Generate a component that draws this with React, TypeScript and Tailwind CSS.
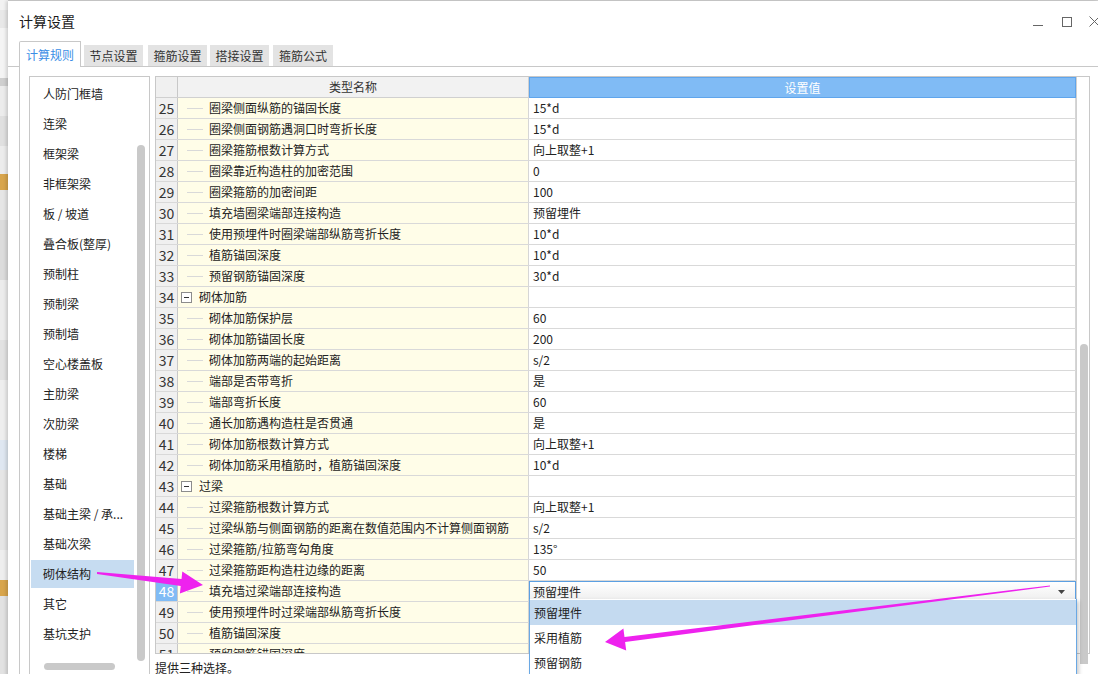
import React from "react";

type Row = { n: number; name: string; value?: string; group?: boolean };

const rows: Row[] = [
  { n: 25, name: "圈梁侧面纵筋的锚固长度", value: "15*d" },
  { n: 26, name: "圈梁侧面钢筋遇洞口时弯折长度", value: "15*d" },
  { n: 27, name: "圈梁箍筋根数计算方式", value: "向上取整+1" },
  { n: 28, name: "圈梁靠近构造柱的加密范围", value: "0" },
  { n: 29, name: "圈梁箍筋的加密间距", value: "100" },
  { n: 30, name: "填充墙圈梁端部连接构造", value: "预留埋件" },
  { n: 31, name: "使用预埋件时圈梁端部纵筋弯折长度", value: "10*d" },
  { n: 32, name: "植筋锚固深度", value: "10*d" },
  { n: 33, name: "预留钢筋锚固深度", value: "30*d" },
  { n: 34, name: "砌体加筋", group: true },
  { n: 35, name: "砌体加筋保护层", value: "60" },
  { n: 36, name: "砌体加筋锚固长度", value: "200" },
  { n: 37, name: "砌体加筋两端的起始距离", value: "s/2" },
  { n: 38, name: "端部是否带弯折", value: "是" },
  { n: 39, name: "端部弯折长度", value: "60" },
  { n: 40, name: "通长加筋遇构造柱是否贯通", value: "是" },
  { n: 41, name: "砌体加筋根数计算方式", value: "向上取整+1" },
  { n: 42, name: "砌体加筋采用植筋时，植筋锚固深度", value: "10*d" },
  { n: 43, name: "过梁", group: true },
  { n: 44, name: "过梁箍筋根数计算方式", value: "向上取整+1" },
  { n: 45, name: "过梁纵筋与侧面钢筋的距离在数值范围内不计算侧面钢筋", value: "s/2" },
  { n: 46, name: "过梁箍筋/拉筋弯勾角度", value: "135°" },
  { n: 47, name: "过梁箍筋距构造柱边缘的距离", value: "50" },
  { n: 48, name: "填充墙过梁端部连接构造", value: "预留埋件" },
  { n: 49, name: "使用预埋件时过梁端部纵筋弯折长度", value: "" },
  { n: 50, name: "植筋锚固深度", value: "" },
  { n: 51, name: "预留钢筋锚固深度", value: "" },
];

const sideItems = [
  "人防门框墙",
  "连梁",
  "框架梁",
  "非框架梁",
  "板 / 坡道",
  "叠合板(整厚)",
  "预制柱",
  "预制梁",
  "预制墙",
  "空心楼盖板",
  "主肋梁",
  "次肋梁",
  "楼梯",
  "基础",
  "基础主梁 / 承...",
  "基础次梁",
  "砌体结构",
  "其它",
  "基坑支护",
];

const options = ["预留埋件", "采用植筋", "预留钢筋"];

const font = { fontFamily: '"Noto Sans CJK SC", "Noto Sans", sans-serif' };

function NameCell({ row }: { row: Row }) {
  return (
    <div className="flex items-center w-[351px] shrink-0 h-full bg-[#fffde8] border-r border-[#d6d6d6] whitespace-nowrap overflow-hidden">
      {row.group ? (
        <>
          <span className="ml-[3px] w-[11px] h-[11px] border border-[#8c8c8c] bg-white flex items-center justify-center">
            <span className="w-[5px] h-px bg-[#333]" />
          </span>
          <span className="ml-[7px]">{row.name}</span>
        </>
      ) : (
        <>
          <span className="ml-[9px] w-[16px] h-px bg-[#d9d9d9]" />
          <span className="ml-[6px]">{row.name}</span>
        </>
      )}
    </div>
  );
}

function TableRow({ row }: { row: Row }) {
  const active = row.n === 48;
  return (
    <div className="flex h-[21px] border-b border-[#d9d9d9] text-[12px] text-[#222]">
      <div
        className={
          active
            ? "w-[22px] shrink-0 flex items-center justify-center bg-[#80bbf5] text-white border-r border-[#c8c8c8] text-[14px]"
            : "w-[22px] shrink-0 flex items-center justify-center bg-[#f0f0f0] border-r border-[#c8c8c8] text-[14px] text-[#333]"
        }
      >
        {row.n}
      </div>
      <NameCell row={row} />
      {active ? (
        <div className="flex-1 flex items-center pl-[3px] border border-[#5b9fe2] bg-linear-to-b from-white to-[#eeeeee] -mb-px">
          <span>{row.value}</span>
          <svg className="ml-auto mr-[10px]" width="7" height="4" viewBox="0 0 7 4">
            <path d="M0 0h7L3.5 4z" fill="#444" />
          </svg>
        </div>
      ) : (
        <div className="flex-1 flex items-center pl-[4px] bg-white border-r border-[#d6d6d6]">
          {row.value}
        </div>
      )}
    </div>
  );
}

function LeftStrip() {
  return (
    <div className="w-[8px] shrink-0 flex flex-col bg-[#e4e4e4]">
      <div className="h-[10px] bg-[#f2f2f2]" />
      <div className="h-[18px] bg-[#e8e8e8]" />
      <div className="h-[50px] bg-[#f4f4f4]" />
      <div className="h-[8px] bg-[#cfcfcf]" />
      <div className="h-[30px] bg-[#ececec]" />
      <div className="h-[30px] bg-[#e0e0e0]" />
      <div className="h-[28px] bg-[#ececec]" />
      <div className="h-[16px] bg-[#d8a54c]" />
      <div className="h-[30px] bg-[#e6e6e6]" />
      <div className="h-[60px] bg-[#dcdcdc]" />
      <div className="h-[60px] bg-[#ececec]" />
      <div className="h-[40px] bg-[#e2e2e2]" />
      <div className="h-[60px] bg-[#eeeeee]" />
      <div className="h-[30px] bg-[#dfe7f1]" />
      <div className="h-[80px] bg-[#e6e6e6]" />
      <div className="h-[30px] bg-[#eeeeee]" />
      <div className="h-[16px] bg-[#d8a54c]" />
      <div className="flex-1 bg-[#e2e2e2]" />
    </div>
  );
}

export default function App() {
  return (
    <div
      className="relative w-[1098px] h-[674px] overflow-hidden flex bg-[#e6e6e6] text-[#222]"
      style={font}
    >
      <LeftStrip />
      <div className="flex-1 flex flex-col min-w-0">
        <div className="h-[4px] bg-[#e9e9e9] border-b border-[#cfcfcf]" />
        <div className="flex-1 flex flex-col bg-white shadow-[-2px_0_3px_rgba(0,0,0,0.15)]">
          {/* title bar */}
          <div className="h-[41px] flex items-center pl-[11px]">
            <span className="text-[14px] text-[#1a1a1a]">计算设置</span>
            <div className="ml-auto flex items-center mr-[-2px]">
              <svg width="10" height="10" viewBox="0 0 10 10">
                <path d="M0 8.5h10" stroke="#666" strokeWidth="1" />
              </svg>
              <svg className="ml-[19px]" width="10" height="10" viewBox="0 0 10 10">
                <rect x="0.5" y="0.5" width="9" height="9" fill="none" stroke="#666" />
              </svg>
              <svg className="ml-[17px]" width="11" height="11" viewBox="0 0 11 11">
                <path d="M0.5 0.5l10 10M10.5 0.5l-10 10" stroke="#666" />
              </svg>
            </div>
          </div>
          {/* tabs */}
          <div className="h-[25px] flex items-end pl-[11px] border-b border-[#c8c8c8] text-[12px]">
            <div className="w-[62px] h-[26px] -mb-px flex items-center justify-center bg-white border border-b-0 border-[#c8c8c8] rounded-tl-[2px] text-[#3a8ee6]">
              计算规则
            </div>
            <div className="ml-[3px] w-[59px] h-[21px] flex items-center justify-center bg-[#e3e3e3] text-[#333]">
              节点设置
            </div>
            <div className="ml-[5px] w-[59px] h-[21px] flex items-center justify-center bg-[#e3e3e3] text-[#333]">
              箍筋设置
            </div>
            <div className="ml-[3px] w-[59px] h-[21px] flex items-center justify-center bg-[#e3e3e3] text-[#333]">
              搭接设置
            </div>
            <div className="ml-[4px] w-[60px] h-[21px] flex items-center justify-center bg-[#e3e3e3] text-[#333]">
              箍筋公式
            </div>
          </div>
          {/* body */}
          <div className="flex-1 ml-[11px] border-l border-[#c8c8c8] flex pl-[9px] pt-[9px]">
            {/* left list */}
            <div className="w-[121px] h-[600px] shrink-0 border border-[#c8c8c8] flex flex-col text-[12px]">
              <div className="flex h-[585px]">
                <div className="w-[104px] pl-[1px] pt-[3px]">
                  {sideItems.map((s) => (
                    <div
                      key={s}
                      className={
                        s === "砌体结构"
                          ? "h-[28px] mb-[2px] flex items-center pl-[12px] bg-[#c6dcf1] whitespace-nowrap"
                          : "h-[28px] mb-[2px] flex items-center pl-[12px] whitespace-nowrap"
                      }
                    >
                      {s}
                    </div>
                  ))}
                </div>
                <div className="pl-[3px] pt-[68px]">
                  <div className="w-[8px] h-[516px] rounded-full bg-[#c9c9c9]" />
                </div>
              </div>
              <div className="ml-[14px] mt-px w-[71px] h-[7px] rounded-full bg-[#c9c9c9]" />
            </div>
            {/* table */}
            <div className="ml-[5px] flex flex-col">
              <div className="relative w-[935px] h-[578px] border border-[#c8c8c8] flex">
                <div className="w-[920px] flex flex-col">
                  <div className="flex h-[21px] border-b border-[#d0d0d0] text-[12px]">
                    <div className="w-[22px] bg-[#f0f0f0] border-r border-[#c8c8c8]" />
                    <div className="w-[351px] bg-[#f2f2f2] border-r border-[#d0d0d0] flex items-center justify-center text-[#333]">
                      类型名称
                    </div>
                    <div className="flex-1 bg-[#80bbf5] border border-[#5fa5ec] -mb-px flex items-center justify-center text-white">
                      设置值
                    </div>
                  </div>
                  <div className="h-[555px] overflow-hidden">
                    {rows.map((r) => (
                      <TableRow key={r.n} row={r} />
                    ))}
                  </div>
                </div>
                <div className="flex-1 bg-white border-l border-[#d0d0d0] pl-[3px] pt-[267px]">
                  <div className="w-[8px] h-[320px] rounded-t-full bg-[#c9c9c9]" />
                </div>
                {/* dropdown list */}
                <div className="absolute left-[373px] top-[522px] w-[548px] h-[90px] bg-white border-x border-[#6aa8e4] shadow-[2px_2px_4px_rgba(0,0,0,0.2)] text-[12px] pt-px">
                  {options.map((o, i) => (
                    <div
                      key={o}
                      className={
                        i === 0
                          ? "h-[25px] flex items-center pl-[4px] bg-[#c4daf0]"
                          : "h-[25px] flex items-center pl-[4px]"
                      }
                    >
                      {o}
                    </div>
                  ))}
                </div>
              </div>
              <div className="mt-[5px] text-[12px] text-[#222]">提供三种选择。</div>
            </div>
          </div>
        </div>
      </div>
      {/* annotation arrows */}
      <svg className="absolute left-0 top-0 pointer-events-none" width="1098" height="674" viewBox="0 0 1098 674">
        <polygon
          points="97,572 181.5,579 182.3,571.6 203,585 179.9,593.4 180.7,586 97,574"
          fill="#ee22ee"
        />
        <polygon
          points="1050,585.5 624.5,637 623.4,628.6 605,642 626.2,650.4 625.1,642 1050,586.5"
          fill="#ee22ee"
        />
      </svg>
    </div>
  );
}
